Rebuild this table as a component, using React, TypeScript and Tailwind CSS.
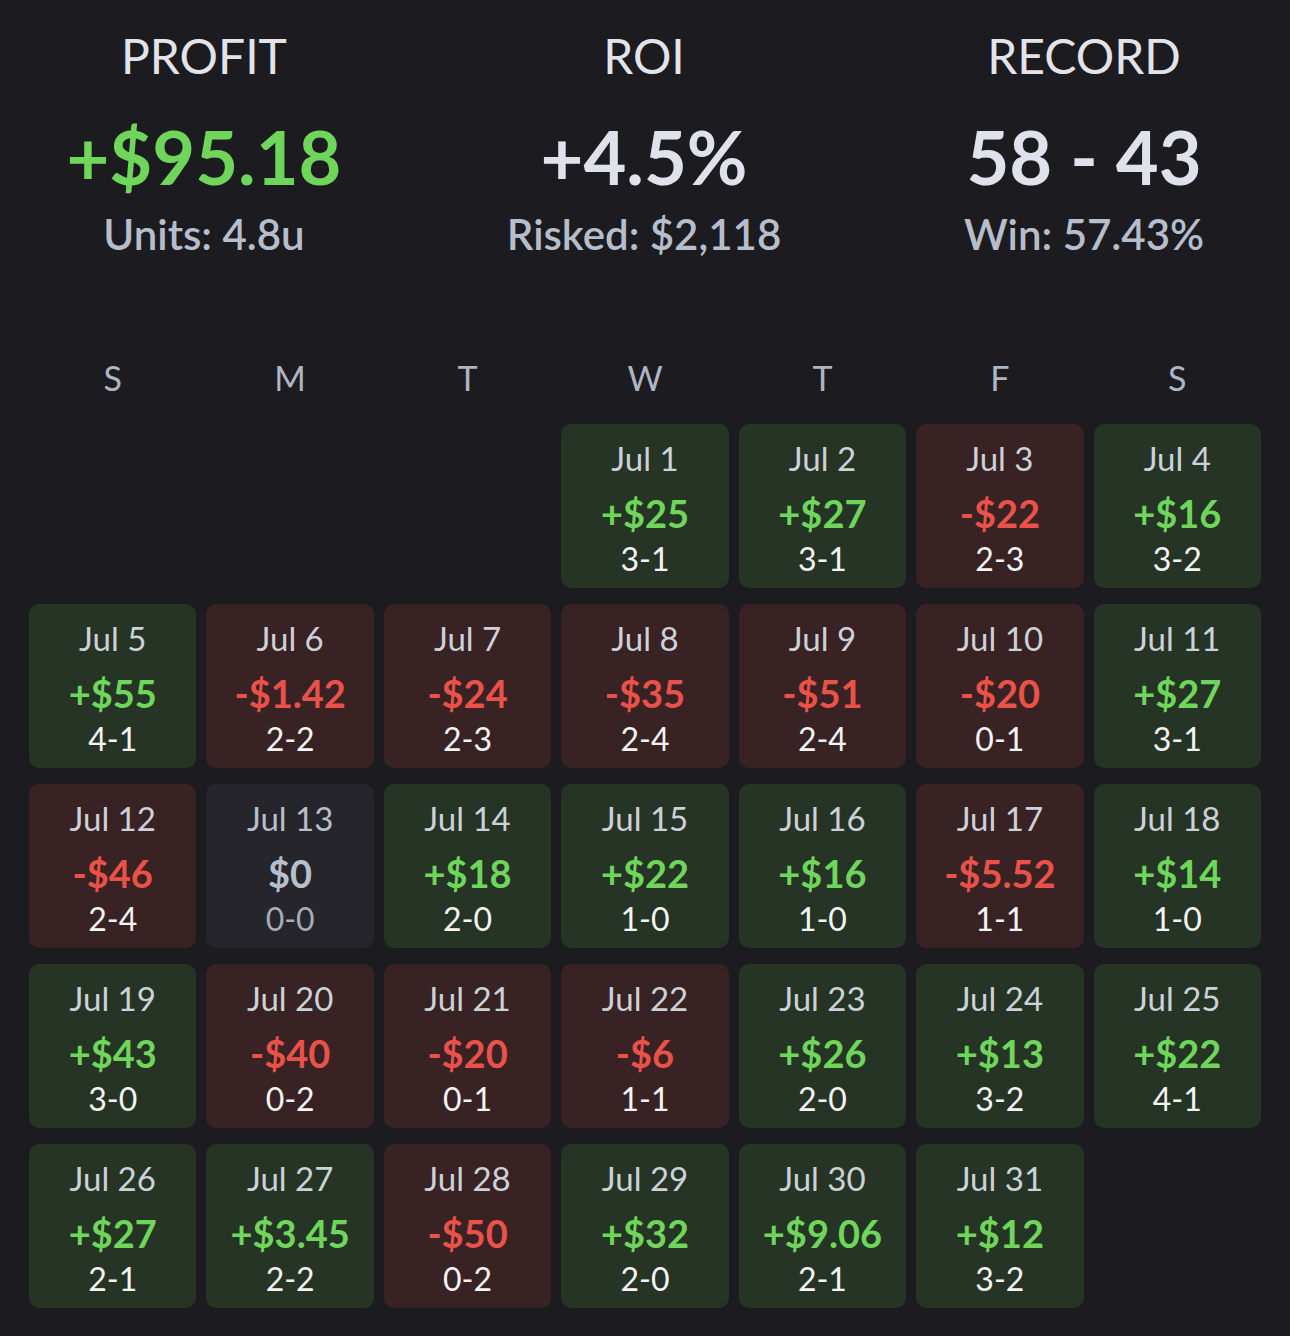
import React from 'react';

type Tone = 'win' | 'loss' | 'push';

type Day = {
  date: string;
  amount: string;
  record: string;
  tone: Tone;
};

// null = blank slot before the 1st
const weeks: (Day | null)[][] = [
  [
    null,
    null,
    null,
    { date: 'Jul 1', amount: '+$25', record: '3-1', tone: 'win' },
    { date: 'Jul 2', amount: '+$27', record: '3-1', tone: 'win' },
    { date: 'Jul 3', amount: '-$22', record: '2-3', tone: 'loss' },
    { date: 'Jul 4', amount: '+$16', record: '3-2', tone: 'win' },
  ],
  [
    { date: 'Jul 5', amount: '+$55', record: '4-1', tone: 'win' },
    { date: 'Jul 6', amount: '-$1.42', record: '2-2', tone: 'loss' },
    { date: 'Jul 7', amount: '-$24', record: '2-3', tone: 'loss' },
    { date: 'Jul 8', amount: '-$35', record: '2-4', tone: 'loss' },
    { date: 'Jul 9', amount: '-$51', record: '2-4', tone: 'loss' },
    { date: 'Jul 10', amount: '-$20', record: '0-1', tone: 'loss' },
    { date: 'Jul 11', amount: '+$27', record: '3-1', tone: 'win' },
  ],
  [
    { date: 'Jul 12', amount: '-$46', record: '2-4', tone: 'loss' },
    { date: 'Jul 13', amount: '$0', record: '0-0', tone: 'push' },
    { date: 'Jul 14', amount: '+$18', record: '2-0', tone: 'win' },
    { date: 'Jul 15', amount: '+$22', record: '1-0', tone: 'win' },
    { date: 'Jul 16', amount: '+$16', record: '1-0', tone: 'win' },
    { date: 'Jul 17', amount: '-$5.52', record: '1-1', tone: 'loss' },
    { date: 'Jul 18', amount: '+$14', record: '1-0', tone: 'win' },
  ],
  [
    { date: 'Jul 19', amount: '+$43', record: '3-0', tone: 'win' },
    { date: 'Jul 20', amount: '-$40', record: '0-2', tone: 'loss' },
    { date: 'Jul 21', amount: '-$20', record: '0-1', tone: 'loss' },
    { date: 'Jul 22', amount: '-$6', record: '1-1', tone: 'loss' },
    { date: 'Jul 23', amount: '+$26', record: '2-0', tone: 'win' },
    { date: 'Jul 24', amount: '+$13', record: '3-2', tone: 'win' },
    { date: 'Jul 25', amount: '+$22', record: '4-1', tone: 'win' },
  ],
  [
    { date: 'Jul 26', amount: '+$27', record: '2-1', tone: 'win' },
    { date: 'Jul 27', amount: '+$3.45', record: '2-2', tone: 'win' },
    { date: 'Jul 28', amount: '-$50', record: '0-2', tone: 'loss' },
    { date: 'Jul 29', amount: '+$32', record: '2-0', tone: 'win' },
    { date: 'Jul 30', amount: '+$9.06', record: '2-1', tone: 'win' },
    { date: 'Jul 31', amount: '+$12', record: '3-2', tone: 'win' },
    null,
  ],
];

const weekdays = ['S', 'M', 'T', 'W', 'T', 'F', 'S'];

const toneStyles: Record<Tone, { box: string; amount: string; date: string; record: string }> = {
  win: {
    box: 'bg-[#263426]',
    amount: 'text-[#6fd65b]',
    date: 'text-[#cdd1d8]',
    record: 'text-[#f4f4f5]',
  },
  loss: {
    box: 'bg-[#382224]',
    amount: 'text-[#ea5249]',
    date: 'text-[#cdd1d8]',
    record: 'text-[#f4f4f5]',
  },
  push: {
    box: 'bg-[#25252b]',
    amount: 'text-[#b7bfcc]',
    date: 'text-[#b7bfcc]',
    record: 'text-[#a4acb9]',
  },
};

function Stat({ label, value, sub, valueColor }: { label: string; value: string; sub: string; valueColor: string }) {
  return (
    <div className="w-[360px] flex flex-col items-center">
      <div className="h-[48px] text-[48px] leading-[48px] text-[#e2e4ea]">{label}</div>
      <div className={`mt-[40px] h-[74px] text-[74px] leading-[74px] font-bold ${valueColor}`}>{value}</div>
      <div className="mt-[19px] h-[42px] text-[42px] leading-[42px] font-semibold text-[#b6becb]">{sub}</div>
    </div>
  );
}

function DayCell({ day }: { day: Day | null }) {
  if (!day) return <div className="h-[164px]" />;
  const s = toneStyles[day.tone];
  return (
    <div className={`h-[164px] rounded-[10px] ${s.box} flex flex-col items-center pt-[14px]`}>
      <div className={`h-[40px] text-[33px] leading-[40px] ${s.date}`}>{day.date}</div>
      <div className={`mt-[13px] h-[44px] text-[38px] leading-[44px] font-bold ${s.amount}`}>{day.amount}</div>
      <div className={`mt-[6px] h-[36px] text-[32px] leading-[36px] ${s.record}`}>{day.record}</div>
    </div>
  );
}

export default function App() {
  return (
    <div
      className="min-h-screen w-full bg-[#1c1c20] pb-[28px]"
      style={{ fontFamily: 'Lato, "Open Sans", "Liberation Sans", sans-serif' }}
    >
      {/* summary */}
      <header className="flex justify-between pl-[24px] pr-[26px] pt-[32px]">
        <Stat label="PROFIT" value="+$95.18" sub="Units: 4.8u" valueColor="text-[#6fd65b]" />
        <Stat label="ROI" value="+4.5%" sub="Risked: $2,118" valueColor="text-[#dfe2ea]" />
        <Stat label="RECORD" value="58 - 43" sub="Win: 57.43%" valueColor="text-[#dfe2ea]" />
      </header>

      {/* calendar */}
      <section className="px-[29px] mt-[106px]">
        <div className="grid grid-cols-7 gap-x-[10px]">
          {weekdays.map((d, i) => (
            <div key={i} className="h-[34px] text-center text-[34px] leading-[34px] text-[#aeb6c3]">
              {d}
            </div>
          ))}
        </div>
        <div className="mt-[29px] grid grid-cols-7 gap-x-[10px] gap-y-[16px]">
          {weeks.flat().map((day, i) => (
            <DayCell key={i} day={day} />
          ))}
        </div>
      </section>
    </div>
  );
}
